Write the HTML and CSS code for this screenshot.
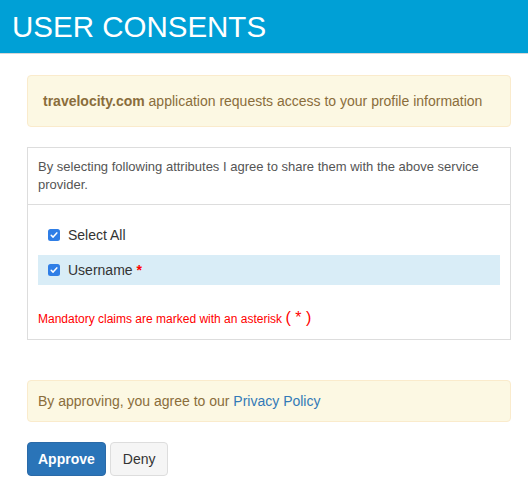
FILE: index.html
```html
<!DOCTYPE html>
<html>
<head>
<meta charset="utf-8">
<link rel="stylesheet" href="styles.css">
</head>
<body>
<header class="header"><h1 class="title">USER CONSENTS</h1></header>
<main class="content">
  <div class="alert alert-top"><strong>travelocity.com</strong> application requests access to your profile information</div>
  <section class="panel">
    <div class="panel-heading">By selecting following attributes I agree to share them with the above service provider.</div>
    <div class="panel-body">
      <label class="claim"><span class="check"><svg viewBox="0 0 12 12" width="12" height="12"><rect width="12" height="12" rx="2.5" fill="#2f7ee6"/><path d="M3.2 6.2 L5.1 8.1 L8.8 3.9" fill="none" stroke="#fff" stroke-width="1.5" stroke-linecap="round" stroke-linejoin="round"/></svg></span>Select All</label>
      <label class="claim claim-info"><span class="check"><svg viewBox="0 0 12 12" width="12" height="12"><rect width="12" height="12" rx="2.5" fill="#2f7ee6"/><path d="M3.2 6.2 L5.1 8.1 L8.8 3.9" fill="none" stroke="#fff" stroke-width="1.5" stroke-linecap="round" stroke-linejoin="round"/></svg></span>Username<span class="req">*</span></label>
      <p class="mandatory">Mandatory claims are marked with an asterisk <span class="big">( * )</span></p>
    </div>
  </section>
  <div class="alert alert-bottom">By approving, you agree to our <a class="link" href="#">Privacy Policy</a></div>
  <div class="buttons">
    <button class="btn btn-primary">Approve</button>
    <button class="btn btn-default">Deny</button>
  </div>
</main>
</body>
</html>
```
FILE: styles.css
```css
html, body {
  margin: 0;
  padding: 0;
  background: #fff;
  font-family: "Liberation Sans", Arial, sans-serif;
  color: #333;
}
.header {
  background: #00a0d6;
  height: 53px;
  border-bottom: 1px solid #d6d6d6;
  display: flex;
  align-items: center;
  padding-left: 12px;
}
.title {
  margin: 0;
  color: #fff;
  font-weight: normal;
  font-size: 29.5px;
  line-height: 34px;
  padding-top: 1px;
}
.content {
  width: 484px;
  margin-left: 27px;
  padding-top: 21px;
}
.alert {
  background: #fcf8e3;
  border: 1px solid #faebcc;
  color: #8a6d3b;
  border-radius: 4px;
  font-size: 14px;
  line-height: 20px;
}
.alert-top {
  padding: 15px;
}
.alert-bottom {
  padding: 10px;
  margin-top: 40px;
}
.link {
  color: #337ab7;
  text-decoration: none;
}
.panel {
  margin-top: 20px;
  border: 1px solid #ddd;
}
.panel-heading {
  padding: 10px;
  font-size: 13px;
  line-height: 18px;
  color: #555;
  border-bottom: 1px solid #ddd;
}
.panel-body {
  padding: 15px 10px 11px;
  display: flex;
  flex-direction: column;
}
.claim {
  display: flex;
  align-items: center;
  height: 30px;
  padding-left: 10px;
  font-size: 14px;
  color: #333;
}
.claim-info {
  background: #d9edf7;
  margin-top: 5px;
}
.check {
  display: flex;
  width: 12px;
  height: 12px;
  margin-right: 8px;
}
.req {
  color: #f00;
  margin-left: 4px;
  font-weight: bold;
}
.mandatory {
  margin: 24px 0 0;
  font-size: 12px;
  line-height: 17px;
  color: #f00;
}
.big {
  font-size: 16px;
}
.buttons {
  margin-top: 20px;
  display: flex;
  gap: 4px;
}
.btn {
  font-family: "Liberation Sans", Arial, sans-serif;
  font-size: 14px;
  line-height: 20px;
  padding: 6px 12px;
  border-radius: 4px;
  border: 1px solid transparent;
  cursor: pointer;
}
.btn-primary {
  background: #2a74b8;
  border-color: #2a6aa8;
  color: #fff;
  font-weight: bold;
  padding: 6px 10px;
}
.btn-default {
  background: #f5f5f5;
  border-color: #ddd;
  color: #333;
}
```
